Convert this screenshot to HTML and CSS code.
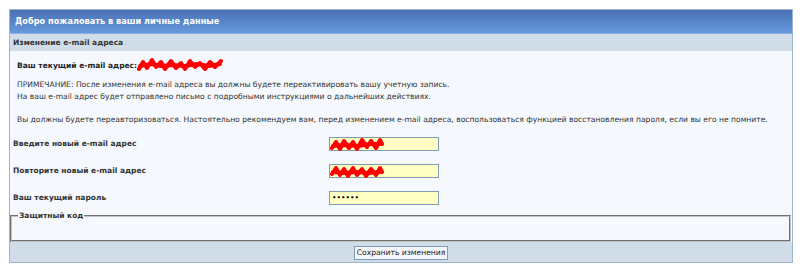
FILE: index.html
```html
<!DOCTYPE html>
<html lang="ru">
<head>
    <meta charset="UTF-8" />
    <title>Изменение e-mail адреса</title>
    <link rel="stylesheet" href="styles.css">
</head>
<body>
    <div class="panel">
        <div class="panel-head">Добро пожаловать в ваши личные данные</div>
        <div class="panel-sub">Изменение e-mail адреса</div>

        <div class="panel-body">
            <div class="current">
                Ваш текущий e-mail адрес:
                <svg class="scribble" width="86" height="16" viewBox="0 0 86 16">
                    <path d="M2 12 L6 5 L10 11 L15 3 L19 10 L24 5 L28 12 L34 4 L39 11 L44 6 L48 12 L53 4 L58 10 L63 6 L68 12 L73 5 L78 10 L84 4" />
                    <path d="M3 9 L14 7 L24 9 L36 8 L48 9 L60 7 L72 9 L83 7" />
                </svg>
            </div>

            <p class="note">ПРИМЕЧАНИЕ: После изменения e-mail адреса вы должны будете переактивировать вашу учетную запись.<br>На ваш e-mail адрес будет отправлено письмо с подробными инструкциями о дальнейших действиях.</p>
            <p class="note">Вы должны будете переавторизоваться. Настоятельно рекомендуем вам, перед изменением e-mail адреса, воспользоваться функцией восстановления пароля, если вы его не помните.</p>

            <div class="rows">
                <div class="row">
                    <label>Введите новый e-mail адрес</label>
                    <span class="field">
                        <input type="text" value="">
                        <svg class="mask" width="54" height="18" viewBox="0 0 54 18">
                            <path d="M2 12 L6 6 L10 13 L14 5 L19 12 L23 6 L27 13 L32 4 L37 11 L41 5 L46 12 L50 4 L52 8" />
                            <path d="M3 10 L15 9 L28 10 L40 8 L50 8" />
                        </svg>
                    </span>
                </div>
                <div class="row">
                    <label>Повторите новый e-mail адрес</label>
                    <span class="field">
                        <input type="text" value="">
                        <svg class="mask" width="54" height="18" viewBox="0 0 54 18">
                            <path d="M2 11 L6 5 L10 12 L14 6 L18 13 L23 5 L27 12 L32 6 L36 13 L41 6 L46 12 L50 5 L52 9" />
                            <path d="M3 9 L14 10 L26 9 L38 10 L50 9" />
                        </svg>
                    </span>
                </div>
                <div class="row">
                    <label>Ваш текущий пароль</label>
                    <span class="field">
                        <input type="password" value="123456">
                    </span>
                </div>
            </div>

            <fieldset class="captcha">
                <legend>Защитный код</legend>
            </fieldset>
        </div>

        <div class="panel-foot">
            <button>Сохранить изменения</button>
        </div>
    </div>
</body>
</html>
```

FILE: styles.css
```css
body {
    margin: 0;
    padding: 9px 7px 0 9px;
    background: #fff;
    font-family: "DejaVu Sans", Verdana, sans-serif;
    font-size: 7.6px;
    color: #333;
}
.panel {
    width: 784px;
    border: 1px solid #9fb3d2;
    box-sizing: border-box;
}
.panel-head {
    height: 23px;
    line-height: 23px;
    padding-left: 5px;
    background: linear-gradient(#4a71b4, #6699dc);
    border-bottom: 1px solid #8aaee0;
    color: #fff;
    font-weight: bold;
    font-size: 8.2px;
}
.panel-sub {
    height: 17px;
    line-height: 17px;
    padding-left: 3px;
    background: #d1dce9;
    font-weight: bold;
    font-size: 7.5px;
    color: #333;
}
.panel-body {
    background: #f5f8fc;
    padding: 6px 0 0;
}
.current {
    height: 12px;
    line-height: 12px;
    padding-left: 7px;
    font-weight: bold;
    font-size: 7.5px;
    color: #222;
}
.scribble {
    vertical-align: -5px;
    margin-left: -3px;
}
.scribble path, .mask path {
    fill: none;
    stroke: #f00;
    stroke-width: 4;
    stroke-linejoin: round;
    stroke-linecap: round;
}
.note {
    margin: 10px 0 0;
    padding-left: 7px;
    line-height: 11.5px;
}
.note + .note {
    margin-top: 11.5px;
}
.rows {
    margin-top: 5px;
}
.row {
    display: flex;
    align-items: center;
    height: 27px;
}
.row label {
    width: 316px;
    padding-left: 3px;
    font-weight: bold;
    font-size: 7.5px;
    color: #333;
}
.field {
    position: relative;
    display: block;
    height: 14px;
}
.field input {
    width: 110px;
    height: 14px;
    box-sizing: border-box;
    margin: 0;
    padding: 0 2px;
    border: 1px solid #7f9db9;
    background: #ffffc4;
    font-family: inherit;
    font-size: 7.6px;
}
.mask {
    position: absolute;
    left: 1px;
    top: -1px;
}
.captcha {
    margin: 0 1px 0 0;
    padding: 0;
    height: 27px;
    border: 2px groove #c4c4c4;
}
.captcha legend {
    margin-left: 6px;
    padding: 0 1px;
    font-weight: bold;
    font-size: 7.5px;
    color: #333;
}
.panel-foot {
    height: 20px;
    background: #d1dce9;
    display: flex;
    justify-content: center;
    align-items: center;
}
.panel-foot button {
    height: 14px;
    padding: 0 2px;
    margin-top: 1px;
    border: 1px solid #7f9db9;
    background: #f3f6fa;
    font-family: inherit;
    font-size: 7.6px;
    color: #222;
    line-height: 12px;
}
```
